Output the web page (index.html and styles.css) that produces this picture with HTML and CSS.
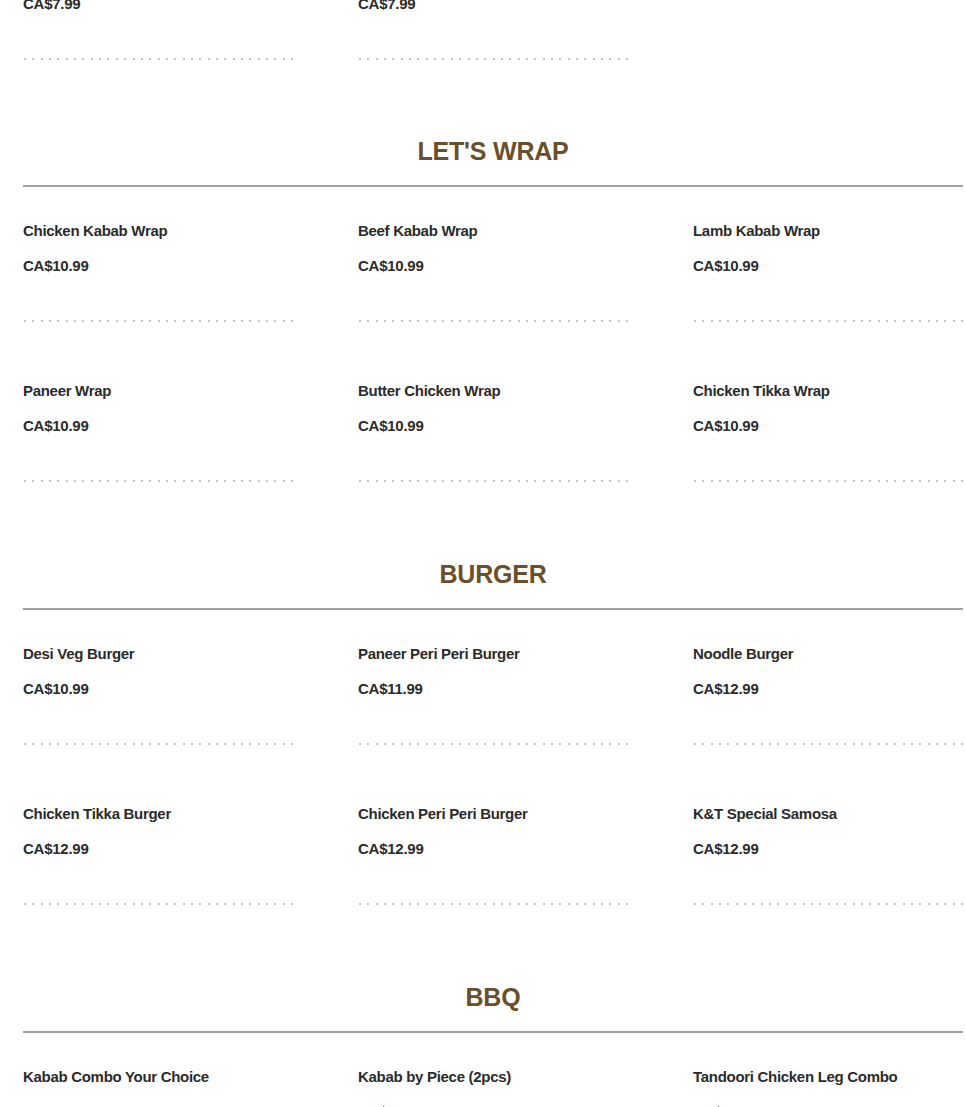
FILE: index.html
```html
<!DOCTYPE html>
<html lang="en">
<head>
<meta charset="utf-8">
<title>Menu</title>
<link rel="stylesheet" href="styles.css">
</head>
<body>
<main class="menu">
  <div class="items items-scrolled">
    <div class="item">
      <div class="item-name">Samosa Chaat</div>
      <div class="item-price">CA$7.99</div>
      <div class="dots"></div>
    </div>
    <div class="item">
      <div class="item-name">Aloo Tikki Chaat</div>
      <div class="item-price">CA$7.99</div>
      <div class="dots"></div>
    </div>
  </div>

  <section class="section">
    <h2 class="section-title">LET'S WRAP</h2>
    <div class="rule"></div>
    <div class="items">
      <div class="item"><div class="item-name">Chicken Kabab Wrap</div><div class="item-price">CA$10.99</div><div class="dots"></div></div>
      <div class="item"><div class="item-name">Beef Kabab Wrap</div><div class="item-price">CA$10.99</div><div class="dots"></div></div>
      <div class="item"><div class="item-name">Lamb Kabab Wrap</div><div class="item-price">CA$10.99</div><div class="dots"></div></div>
      <div class="item"><div class="item-name">Paneer Wrap</div><div class="item-price">CA$10.99</div><div class="dots"></div></div>
      <div class="item"><div class="item-name">Butter Chicken Wrap</div><div class="item-price">CA$10.99</div><div class="dots"></div></div>
      <div class="item"><div class="item-name">Chicken Tikka Wrap</div><div class="item-price">CA$10.99</div><div class="dots"></div></div>
    </div>
  </section>

  <section class="section">
    <h2 class="section-title">BURGER</h2>
    <div class="rule"></div>
    <div class="items">
      <div class="item"><div class="item-name">Desi Veg Burger</div><div class="item-price">CA$10.99</div><div class="dots"></div></div>
      <div class="item"><div class="item-name">Paneer Peri Peri Burger</div><div class="item-price">CA$11.99</div><div class="dots"></div></div>
      <div class="item"><div class="item-name">Noodle Burger</div><div class="item-price">CA$12.99</div><div class="dots"></div></div>
      <div class="item"><div class="item-name">Chicken Tikka Burger</div><div class="item-price">CA$12.99</div><div class="dots"></div></div>
      <div class="item"><div class="item-name">Chicken Peri Peri Burger</div><div class="item-price">CA$12.99</div><div class="dots"></div></div>
      <div class="item"><div class="item-name">K&amp;T Special Samosa</div><div class="item-price">CA$12.99</div><div class="dots"></div></div>
    </div>
  </section>

  <section class="section">
    <h2 class="section-title">BBQ</h2>
    <div class="rule"></div>
    <div class="items">
      <div class="item"><div class="item-name">Kabab Combo Your Choice</div><div class="item-desc">Served with rice, naan and salad</div><div class="dots"></div></div>
      <div class="item"><div class="item-name">Kabab by Piece (2pcs)</div><div class="item-price">CA$7.99</div><div class="dots"></div></div>
      <div class="item"><div class="item-name">Tandoori Chicken Leg Combo</div><div class="item-price">CA$18.99</div><div class="dots"></div></div>
    </div>
  </section>
</main>
</body>
</html>
```
FILE: styles.css
```css
html, body {
  margin: 0;
  padding: 0;
  background: #ffffff;
  overflow: hidden;
}

body {
  font-family: "Liberation Sans", Arial, Helvetica, sans-serif;
  color: #2b2b2b;
}

.menu {
  width: 940px;
  padding-left: 23px;
}

.items {
  display: grid;
  grid-template-columns: repeat(3, 270px);
  column-gap: 65px;
  row-gap: 59px;
}

.items-scrolled {
  margin-top: -41px;
}

.item {
  display: flex;
  flex-direction: column;
}

.item-name {
  font-size: 15px;
  font-weight: bold;
  line-height: 20px;
  letter-spacing: -0.3px;
  white-space: nowrap;
}

.item-price {
  margin-top: 15px;
  font-size: 15px;
  font-weight: bold;
  line-height: 20px;
  letter-spacing: -0.25px;
}

.item-desc {
  margin-top: 15px;
  font-size: 13px;
  line-height: 20px;
  color: #9a9a9a;
}

.dots {
  margin-top: 44px;
  height: 2px;
  width: 270px;
  background-image: repeating-linear-gradient(to right, #c4c4c4 0, #c4c4c4 2px, transparent 2px, transparent 8.35px);
  background-position: 1px 0;
}

.section {
  margin-top: 76px;
}

.section + .section {
  margin-top: 77px;
}

.section-title {
  margin: 0;
  text-align: center;
  font-size: 25px;
  line-height: 30px;
  font-weight: bold;
  letter-spacing: -0.2px;
  color: #6b4f2a;
}

.rule {
  margin-top: 19px;
  height: 2px;
  background: #a0a0a0;
}

.section .items {
  margin-top: 34px;
}
```
